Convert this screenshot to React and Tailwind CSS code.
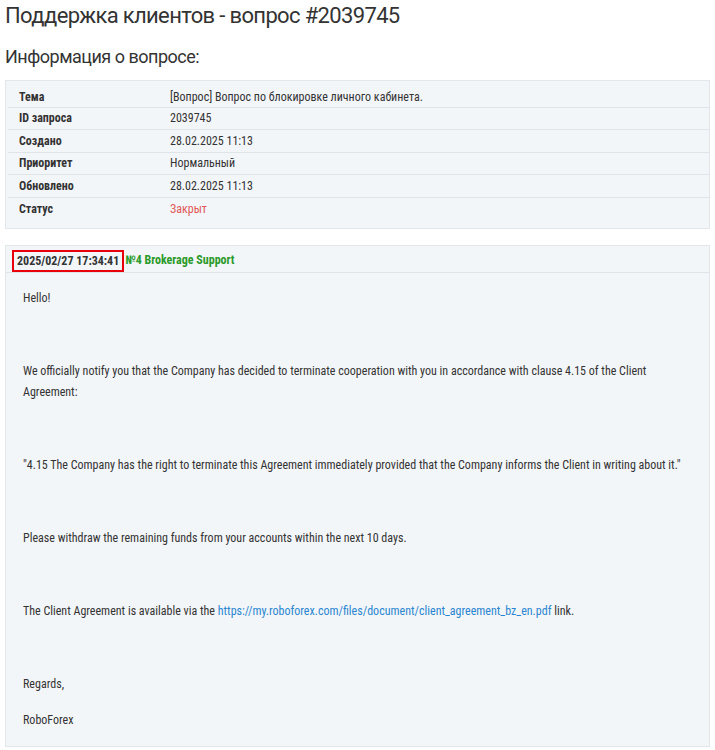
import React from "react";

const info = [
  { label: "Тема", value: "[Вопрос] Вопрос по блокировке личного кабинета." },
  { label: "ID запроса", value: "2039745" },
  { label: "Создано", value: "28.02.2025 11:13" },
  { label: "Приоритет", value: "Нормальный" },
  { label: "Обновлено", value: "28.02.2025 11:13" },
  { label: "Статус", value: "Закрыт", closed: true },
];

const Spacer = () => <p className="mb-[15.5px] h-[21px]">&nbsp;</p>;

const TicketView = () => {
  return (
    <div className="min-h-[750px] bg-white px-[5px] pb-[4px] text-[#333] font-['Liberation_Sans_Narrow','Roboto_Condensed',Roboto,sans-serif]">
      <h1 className="pt-[1px] text-[22px] leading-[30px] tracking-[-0.65px] font-['Roboto',sans-serif] text-[#333]">
        Поддержка клиентов - вопрос #2039745
      </h1>
      <h2 className="mt-[13px] text-[18px] leading-[26px] tracking-[-0.5px] font-['Roboto',sans-serif] text-[#333]">
        Информация о вопросе:
      </h2>

      <div className="mt-[10px] border border-[#e2e7eb] bg-[#f3f6f9] pl-[2px] pt-[3px] pb-[8px] text-[12px]">
        <table className="w-full border-collapse">
          <tbody>
            {info.map((row, i) => (
              <tr
                key={row.label}
                className={i < info.length - 1 ? "border-b border-[#dfe4e8]" : ""}
              >
                <td className={`w-[162px] pl-[11px] font-bold ${i === 0 ? "h-[23px] pt-[3px]" : "h-[22.5px]"}`}>
                  {row.label}
                </td>
                <td className={`${i === 0 ? "pt-[3px]" : ""} ${row.closed ? "text-[#e0585a]" : ""}`}>
                  {row.value}
                </td>
              </tr>
            ))}
          </tbody>
        </table>
      </div>

      <div className="mt-[16px] border border-[#e2e7eb] bg-[#f3f6f9] text-[12px]">
        <div className="flex h-[27px] items-end border-b border-[#dfe4e8] pl-[6px]">
          <span className="border-2 border-[#e8000b] px-[3px] h-[22px] leading-[18px] font-bold text-[#333]">
            2025/02/27 17:34:41
          </span>
          <span className="mb-[3px] ml-[1px] font-bold text-[#2a9a2a]">№4 Brokerage Support</span>
        </div>
        <div className="px-[17px] pt-[15px] leading-[21px]">
          <p className="mb-[15.5px]">Hello!</p>
          <Spacer />
          <p className="mb-[15.5px]">
            We officially notify you that the Company has decided to terminate cooperation with you in
            accordance with clause 4.15 of the Client Agreement:
          </p>
          <Spacer />
          <p className="mb-[15.5px]">
            "4.15 The Company has the right to terminate this Agreement immediately provided that the
            Company informs the Client in writing about it."
          </p>
          <Spacer />
          <p className="mb-[15.5px]">Please withdraw the remaining funds from your accounts within the next 10 days.</p>
          <Spacer />
          <p className="mb-[15.5px]">
            The Client Agreement is available via the{" "}
            <a href="#" className="text-[#2a86d0]">
              https://my.roboforex.com/files/document/client_agreement_bz_en.pdf
            </a>{" "}
            link.
          </p>
          <Spacer />
          <p className="mb-[15.5px]">Regards,</p>
          <p className="mb-[14.5px]">RoboForex</p>
        </div>
      </div>
    </div>
  );
};

export default function App() {
  return <TicketView />;
}
